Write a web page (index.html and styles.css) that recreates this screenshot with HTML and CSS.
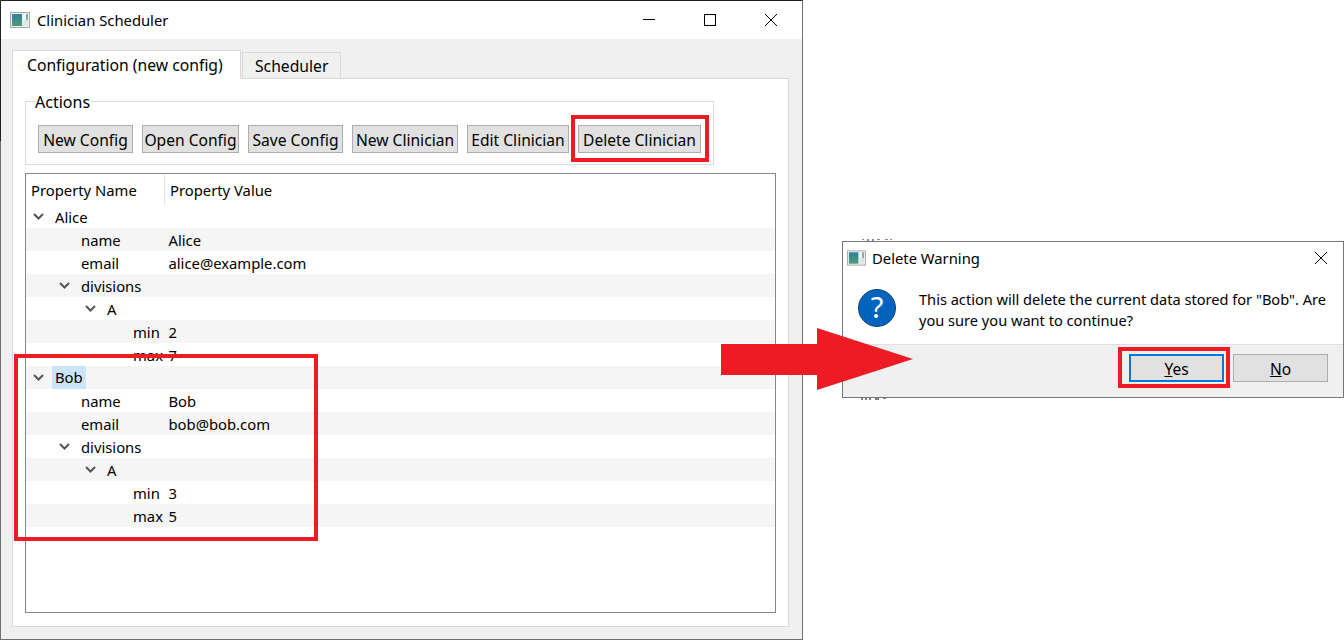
FILE: index.html
```html
<!DOCTYPE html>
<html lang="en">

<head>
    <meta charset="UTF-8">
    <meta name="viewport" content="width=device-width, initial-scale=1.0">
    <title>Clinician Scheduler</title>
    <link rel="stylesheet" href="styles.css">
</head>

<body>
    <div class="window main-window">
        <div class="titlebar">
            <svg class="app-icon" viewBox="0 0 20 16">
                <defs>
                    <linearGradient id="panel" x1="0" y1="0" x2="0" y2="1">
                        <stop offset="0" stop-color="#2f7f9f"/>
                        <stop offset="1" stop-color="#4f9c78"/>
                    </linearGradient>
                </defs>
                <rect x="0.5" y="0.5" width="19" height="15" fill="#f2f4f4" stroke="#a3a9ad"/>
                <rect x="2" y="2" width="10" height="12" fill="url(#panel)"/>
                <rect x="16" y="2" width="2" height="7" fill="#6fb296"/>
                <rect x="13" y="8" width="5" height="6" fill="#dfe5e5"/>
            </svg>
            <span class="title-text">Clinician Scheduler</span>
            <div class="controls">
                <svg class="ctl" viewBox="0 0 61 38"><path d="M24 18.5H36" stroke="#000" fill="none"/></svg>
                <svg class="ctl" viewBox="0 0 61 38"><rect x="24.5" y="13.5" width="11" height="11" stroke="#000" fill="none"/></svg>
                <svg class="ctl" viewBox="0 0 61 38"><path d="M24 13L36 25M36 13L24 25" stroke="#000" fill="none"/></svg>
            </div>
        </div>

        <div class="client">
            <div class="tabs">
                <div class="tab active">Configuration (new config)</div>
                <div class="tab other">Scheduler</div>
            </div>
            <div class="pane">
                <fieldset class="group">
                    <legend>Actions</legend>
                    <button class="btn w95">New Config</button>
                    <button class="btn w97">Open Config</button>
                    <button class="btn w95">Save Config</button>
                    <button class="btn w106">New Clinician</button>
                    <button class="btn w102">Edit Clinician</button>
                    <button class="btn w123">Delete Clinician</button>
                </fieldset>

                <div class="tree">
                    <div class="tree-head">
                        <div class="head-cell first">Property Name</div>
                        <div class="head-cell">Property Value</div>
                    </div>

                    <div class="row">
                        <div class="name l0"><svg class="chev" viewBox="0 0 11 7"><path d="M1 1L5.5 5.5L10 1"/></svg>Alice</div>
                    </div>
                    <div class="row alt"><div class="name leaf1">name</div><div>Alice</div></div>
                    <div class="row"><div class="name leaf1">email</div><div>alice@example.com</div></div>
                    <div class="row alt">
                        <div class="name l1"><svg class="chev" viewBox="0 0 11 7"><path d="M1 1L5.5 5.5L10 1"/></svg>divisions</div>
                    </div>
                    <div class="row">
                        <div class="name l2"><svg class="chev" viewBox="0 0 11 7"><path d="M1 1L5.5 5.5L10 1"/></svg>A</div>
                    </div>
                    <div class="row alt"><div class="name leaf3">min</div><div>2</div></div>
                    <div class="row"><div class="name leaf3">max</div><div>7</div></div>

                    <div class="row alt">
                        <div class="name l0"><svg class="chev" viewBox="0 0 11 7"><path d="M1 1L5.5 5.5L10 1"/></svg><span class="selected">Bob</span></div>
                    </div>
                    <div class="row"><div class="name leaf1">name</div><div>Bob</div></div>
                    <div class="row alt"><div class="name leaf1">email</div><div>bob@bob.com</div></div>
                    <div class="row">
                        <div class="name l1"><svg class="chev" viewBox="0 0 11 7"><path d="M1 1L5.5 5.5L10 1"/></svg>divisions</div>
                    </div>
                    <div class="row alt">
                        <div class="name l2"><svg class="chev" viewBox="0 0 11 7"><path d="M1 1L5.5 5.5L10 1"/></svg>A</div>
                    </div>
                    <div class="row"><div class="name leaf3">min</div><div>3</div></div>
                    <div class="row alt"><div class="name leaf3">max</div><div>5</div></div>
                </div>
            </div>
        </div>
    </div>

    <!-- tips of the tree text that stick out above and below the dialog -->
    <svg class="ticks ticks-top" viewBox="0 0 34 2">
        <path d="M3 0H5M9 0V2M14 0V2M18 0H21M26 0H29M31 0H33" stroke="#666" stroke-width="1.5" fill="none"/>
    </svg>
    <svg class="ticks ticks-bottom" viewBox="0 0 26 2">
        <path d="M1 0V2M5 0V2M9 0V2M14 1H18M22 0H25" stroke="#555" stroke-width="1.5" fill="none"/>
    </svg>

    <div class="window dialog">
        <div class="titlebar small">
            <svg class="app-icon" viewBox="0 0 20 16">
                <defs>
                    <linearGradient id="panel2" x1="0" y1="0" x2="0" y2="1">
                        <stop offset="0" stop-color="#2f7f9f"/>
                        <stop offset="1" stop-color="#4f9c78"/>
                    </linearGradient>
                </defs>
                <rect x="0.5" y="0.5" width="19" height="15" fill="#f2f4f4" stroke="#a3a9ad"/>
                <rect x="2" y="2" width="10" height="12" fill="url(#panel2)"/>
                <rect x="16" y="2" width="2" height="7" fill="#6fb296"/>
                <rect x="13" y="8" width="5" height="6" fill="#dfe5e5"/>
            </svg>
            <span class="title-text">Delete Warning</span>
            <svg class="dlg-close" viewBox="0 0 12 12"><path d="M0 0L12 12M12 0L0 12" stroke="#000" fill="none"/></svg>
        </div>
        <div class="dlg-body">
            <div class="question">?</div>
            <p class="dlg-text">This action will delete the current data stored for "Bob". Are you sure you want to continue?</p>
        </div>
        <div class="dlg-foot">
            <button class="btn dlg-btn focused"><u>Y</u>es</button>
            <button class="btn dlg-btn"><u>N</u>o</button>
        </div>
    </div>

    <!-- annotations drawn over the screenshot -->
    <div class="mark mark-delete"></div>
    <div class="mark mark-bob"></div>
    <div class="mark mark-yes"></div>
    <svg class="arrow" viewBox="0 0 192 62"><polygon points="0,16 96,16 96,0 192,31 96,62 96,47 0,47" fill="#ed1c24"/></svg>
</body>

</html>
```

FILE: styles.css
```css
html, body {
    margin: 0;
    height: 100%;
    overflow: hidden;
    background: #fff;
}

body {
    position: relative;
    font-family: "Noto Sans", sans-serif;
    font-size: 14.8px;
    color: #000;
}

.window {
    position: absolute;
    box-sizing: border-box;
    display: flex;
    flex-direction: column;
    background: #fff;
}

.main-window {
    left: 0;
    top: 0;
    width: 803px;
    height: 640px;
    border: 1px solid #6f6f6f;
    border-top-color: #222;
}

/* the upper part of the left edge is darker */
.main-window::before {
    content: "";
    position: absolute;
    left: -1px;
    top: 0;
    width: 1px;
    height: 140px;
    background: #222;
}

.titlebar {
    display: flex;
    align-items: center;
    height: 38px;
    flex: none;
    padding-left: 9px;
}

.app-icon {
    width: 20px;
    height: 16px;
    margin-right: 7px;
    flex: none;
}

.controls {
    display: flex;
    margin-left: auto;
}

.ctl {
    width: 61px;
    height: 38px;
}

.client {
    flex: 1;
    display: flex;
    flex-direction: column;
    background: #f0f0f0;
    padding: 11px 13px 12px 11px;
    min-height: 0;
}

.tabs {
    display: flex;
    align-items: flex-end;
    height: 29px;
    flex: none;
    margin-bottom: -1px;
    position: relative;
    font-size: 15.7px;
}

.tab {
    box-sizing: border-box;
    height: 27px;
    border: 1px solid #d9d9d9;
    padding: 0 12px;
    line-height: 26px;
    background: #f0f0f0;
}

.tab.other {
    width: 99px;
    margin-left: 1px;
}

.tab.active {
    width: 229px;
    height: 29px;
    background: #fff;
    border-bottom-color: #fff;
    line-height: 28px;
    padding: 0 14px;
}

.pane {
    flex: 1;
    box-sizing: border-box;
    background: #fff;
    border: 1px solid #d9d9d9;
    padding: 0 12px 13px 12px;
    display: flex;
    flex-direction: column;
}

.group {
    box-sizing: border-box;
    width: 689px;
    height: 72px;
    margin: 14px 0 0;
    border: 1px solid #dcdcdc;
    padding: 16px 0 0 12px;
    display: flex;
    gap: 9px;
    align-items: flex-start;
    font-size: 15.6px;
}

.group legend {
    padding: 0;
    margin-left: -3px;
    line-height: 18px;
    height: 16px;
    font-size: 16px;
}

.btn {
    box-sizing: border-box;
    height: 28px;
    padding: 1px 0 0;
    background: #e1e1e1;
    border: 1px solid #adadad;
    font: inherit;
    color: #000;
}

.w95 { width: 95px; }
.w97 { width: 97px; }
.w102 { width: 102px; }
.w106 { width: 106px; }
.w123 { width: 123px; }

.tree {
    box-sizing: border-box;
    flex: 1;
    border: 1px solid #828790;
    margin-top: 8px;
}

.tree-head {
    display: flex;
    height: 31px;
    align-items: stretch;
}

.head-cell {
    padding-left: 5px;
    line-height: 33px;
}

.head-cell.first {
    width: 133px;
    border-right: 1px solid #e5e5e5;
}

.row {
    display: flex;
    align-items: center;
    height: 23px;
    white-space: nowrap;
}

.row.alt {
    background: #f5f5f5;
}

.name {
    box-sizing: border-box;
    width: 142.5px;
    flex: none;
    display: flex;
    align-items: center;
}

.l0 { padding-left: 7px; }
.l1 { padding-left: 33px; }
.l2 { padding-left: 59px; }
.leaf1 { padding-left: 55px; }
.leaf3 { padding-left: 107px; }

.chev {
    width: 11px;
    height: 7px;
    margin-right: 11px;
    flex: none;
}

.chev path {
    fill: none;
    stroke: #555;
    stroke-width: 2;
}

.selected {
    background: #cce4f7;
    padding: 0 3px;
    margin-left: -3px;
    line-height: 23px;
}

.ticks {
    position: absolute;
    height: 2px;
}

.ticks-top {
    left: 859px;
    top: 239px;
    width: 34px;
}

.ticks-bottom {
    left: 861px;
    top: 398px;
    width: 26px;
}

/* dialog */
.dialog {
    left: 842px;
    top: 241px;
    width: 502px;
    height: 157px;
    border: 1px solid #777;
}

.titlebar.small {
    height: 32px;
    padding-left: 4px;
}

.titlebar.small .app-icon {
    width: 19px;
    height: 16px;
    margin-right: 6px;
}

.dlg-close {
    width: 12px;
    height: 12px;
    margin-left: auto;
    margin-right: 16px;
}

.dlg-body {
    flex: 1;
    display: flex;
    padding: 15px 12px 0 15px;
}

.question {
    box-sizing: border-box;
    width: 38px;
    height: 38px;
    flex: none;
    border-radius: 50%;
    background: #0063be;
    border: 1px solid #12467c;
    color: #fff;
    font-size: 29px;
    line-height: 34px;
    text-align: center;
    margin-right: 23px;
}

.dlg-text {
    margin: 0;
    font-size: 14.6px;
    line-height: 21px;
}

.dlg-foot {
    height: 53px;
    flex: none;
    box-sizing: border-box;
    background: #f0f0f0;
    border-top: 1px solid #dfdfdf;
    display: flex;
    justify-content: flex-end;
    gap: 9px;
    padding: 9px 15px 0 0;
}

.dlg-btn {
    width: 95px;
    font-size: 15.5px;
}

.dlg-btn.focused {
    border: 2px solid #0078d7;
}

/* annotations */
.mark {
    position: absolute;
    box-sizing: border-box;
    border: 4px solid #ed1c24;
}

.mark-delete {
    left: 571px;
    top: 115px;
    width: 138px;
    height: 47px;
}

.mark-bob {
    left: 14px;
    top: 354px;
    width: 304px;
    height: 187px;
}

.mark-yes {
    left: 1118px;
    top: 347px;
    width: 112px;
    height: 41px;
}

.arrow {
    position: absolute;
    left: 721px;
    top: 328px;
    width: 192px;
    height: 62px;
}
```
